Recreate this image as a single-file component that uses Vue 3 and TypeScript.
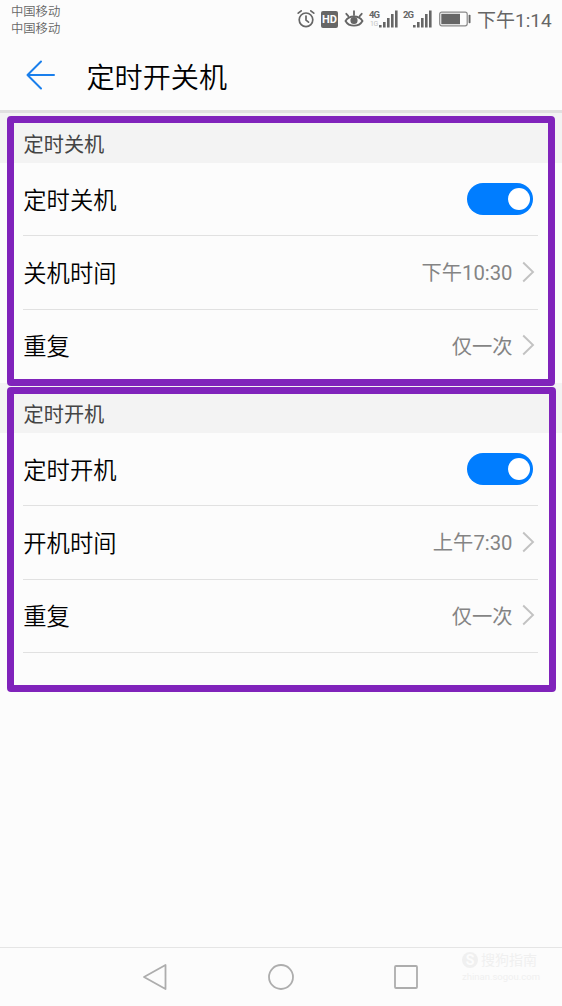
<script setup lang="ts">
interface Row {
  label: string
  value?: string
}

interface Section {
  id: string
  title: string
  rows: Row[]
}

const carriers: string[] = ['中国移动', '中国移动']

const sections: Section[] = [
  {
    id: 'off',
    title: '定时关机',
    rows: [
      { label: '定时关机' },
      { label: '关机时间', value: '下午10:30' },
      { label: '重复', value: '仅一次' },
    ],
  },
  {
    id: 'on',
    title: '定时开机',
    rows: [
      { label: '定时开机' },
      { label: '开机时间', value: '上午7:30' },
      { label: '重复', value: '仅一次' },
    ],
  },
]
</script>

<template>
  <div class="screen">
    <div class="status">
      <div class="carriers">
        <span v-for="(c, i) in carriers" :key="i">{{ c }}</span>
      </div>
      <div class="indicators">
        <svg class="alarm" width="18" height="20" viewBox="0 0 18 20" fill="none" stroke="#666" stroke-width="1.7" stroke-linecap="round">
          <circle cx="9" cy="10.8" r="6.8" />
          <path d="M9 7v4.2l2.5 2M1.2 4.2 4.2 1.8M16.8 4.2l-3-2.4" />
        </svg>
        <span class="hd">HD</span>
        <svg class="eye" width="20" height="20" viewBox="0 0 20 20" fill="none" stroke="#666" stroke-width="1.8" stroke-linecap="round">
          <path d="M1.500 12C5 6 15 6 18.500 12C15 18.300 5 18.300 1.500 12Z" />
          <path d="M10 6V2.200M4.300 7.200 2.300 4.800M15.700 7.200l2-2.400" />
          <circle cx="10" cy="11.500" r="2.700" fill="#666" />
        </svg>
        <div class="network">
          <span class="net"><b>4G</b><small>1G</small></span>
          <svg width="19" height="18" viewBox="0 0 19 18" fill="#666">
            <path d="M0 15h2.600v2.500H0zM4 12h2.600v5.500H4zM8 8h2.600v9.500H8zM12 4h2.600v13.500H12zM16 0.500h2.600v17H16z" />
          </svg>
        </div>
        <div class="network">
          <span class="net"><b>2G</b></span>
          <svg width="19" height="18" viewBox="0 0 19 18" fill="#666">
            <path d="M0 15h2.600v2.500H0zM4 12h2.600v5.500H4zM8 8h2.600v9.500H8zM12 4h2.600v13.500H12zM16 0.500h2.600v17H16z" />
          </svg>
        </div>
        <svg class="battery" width="32" height="16" viewBox="0 0 32 16">
          <rect x=".7" y="1.200" width="27.500" height="13.600" rx="2" fill="none" stroke="#888" stroke-width="1.200" />
          <rect x="2.300" y="2.800" width="18.700" height="10.400" fill="#666" />
          <rect x="29.600" y="3.800" width="1.900" height="8.400" rx=".8" fill="#666" />
        </svg>
        <span class="clock">下午1:14</span>
      </div>
    </div>

    <header class="header">
      <svg class="back" width="30" height="30" viewBox="0 0 30 30" fill="none" stroke="#1a7fec" stroke-width="2" stroke-linecap="round" stroke-linejoin="round">
        <path d="M15 1.500 1.500 15 15 28.500M1.500 15H28" />
      </svg>
      <h1>定时开关机</h1>
    </header>

    <section v-for="s in sections" :key="s.id" class="section" :class="s.id">
      <h2>{{ s.title }}</h2>
      <div v-for="row in s.rows" :key="row.label" class="row">
        <span class="label">{{ row.label }}</span>
        <template v-if="row.value">
          <span class="value">{{ row.value }}</span>
          <svg class="chevron" width="13" height="22" viewBox="0 0 13 22" fill="none" stroke="#c2c2c2" stroke-width="1.900">
            <path d="M1.200 1.500 11 11 1.200 20.500" />
          </svg>
        </template>
        <span v-else class="toggle"><i></i></span>
      </div>
      <div class="frame"></div>
    </section>

    <nav class="navbar">
      <svg width="26" height="28" viewBox="0 0 26 28"><path d="M23.500 2v24L2 14Z" /></svg>
      <svg width="28" height="28" viewBox="0 0 28 28"><circle cx="14" cy="14" r="12" /></svg>
      <svg width="26" height="26" viewBox="0 0 26 26"><rect x="2" y="2" width="22" height="22" rx="1" /></svg>
      <div class="watermark">
        <div class="brand"><span class="logo">S</span>搜狗指南</div>
        <div class="site">zhinan.sogou.com</div>
      </div>
    </nav>
  </div>
</template>

<style>
body {
  margin: 0;
}
</style>

<style scoped>
.screen {
  display: flex;
  flex-direction: column;
  width: 562px;
  height: 1006px;
  overflow: hidden;
  background: #fcfcfc;
  color: #000;
  font-family: Roboto, "Noto Sans CJK SC", sans-serif;
}
.status {
  display: flex;
  justify-content: space-between;
  height: 40px;
  color: #666;
}
.carriers {
  display: flex;
  flex-direction: column;
  padding: 4px 0 0 11px;
  font-size: 12.3px;
  font-weight: 350;
  line-height: 17px;
}
.indicators {
  display: flex;
  align-items: center;
  height: 38px;
  padding-right: 12px;
}
.hd {
  width: 17px;
  height: 17px;
  margin-left: 6px;
  border-radius: 2px;
  background: #666;
  color: #fcfcfc;
  font-size: 11px;
  font-weight: 700;
  line-height: 18px;
  text-align: center;
}
.eye {
  margin-left: 6px;
}
.network {
  display: flex;
  align-items: flex-end;
  height: 18px;
  margin-left: 5px;
}
.net {
  display: flex;
  flex-direction: column;
  width: 10px;
  height: 18px;
  font-size: 9.500px;
  line-height: 10px;
}
.net b {
  letter-spacing: -1px;
}
.net small {
  padding-left: 1px;
  color: #c4c4c4;
  font-size: 7px;
  line-height: 9px;
  letter-spacing: -0.5px;
}
.battery {
  margin-left: 7px;
}
.clock {
  width: 73px;
  margin-left: 6px;
  padding-top: 3px;
  font-size: 19px;
  line-height: 38px;
  white-space: nowrap;
}
.header {
  display: flex;
  align-items: center;
  height: 70px;
  border-bottom: 3px solid #e0e0e0;
}
.back {
  margin: 0 30.500px 0 26px;
}
h1 {
  margin: 8px 0 0;
  color: #000;
  font-size: 28.100px;
  font-weight: 350;
  line-height: 40px;
}
.section {
  position: relative;
  height: 270px;
}
h2 {
  box-sizing: border-box;
  height: 50px;
  margin: 0;
  padding: 13px 24px 0 23.500px;
  background: #f3f3f3;
  color: #444;
  font-size: 20.200px;
  font-weight: 400;
  line-height: 38px;
}
.row {
  box-sizing: border-box;
  display: flex;
  align-items: center;
  height: 73.300px;
  margin: 0 24px 0 23px;
  border-bottom: 1px solid #e1e1e1;
}
.off .row:nth-of-type(3) {
  border-color: transparent;
}
.label {
  flex: 1;
  padding: 3px 0 0 0.300px;
  font-size: 23.300px;
  font-weight: 350;
  line-height: 34px;
}
.value {
  padding-top: 2px;
  color: #848484;
  font-size: 20.300px;
  line-height: 34px;
}
.chevron {
  margin: 0 3px 1px 9.500px;
}
.toggle {
  box-sizing: border-box;
  display: flex;
  justify-content: flex-end;
  width: 66px;
  height: 32px;
  margin-right: 5px;
  padding: 5px 3px;
  border-radius: 16px;
  background: #007dff;
}
.toggle i {
  width: 22px;
  height: 22px;
  border-radius: 50%;
  background: #fff;
}
.frame {
  position: absolute;
  z-index: 1;
  box-sizing: border-box;
  top: 3px;
  left: 7px;
  width: 548px;
  height: 270px;
  border: 7px solid #8023bb;
  border-radius: 4px;
}
.on .frame {
  top: 4px;
  width: 549px;
  height: 305px;
}
.navbar {
  position: relative;
  box-sizing: border-box;
  display: flex;
  align-items: center;
  height: 59px;
  margin-top: auto;
  padding-left: 142px;
  border-top: 1px solid #e5e5e5;
}
.navbar svg {
  fill: none;
  stroke: #adadad;
  stroke-width: 1.800;
  stroke-linejoin: round;
}
.navbar svg + svg {
  margin-left: 98.500px;
}
.watermark {
  position: absolute;
  top: 2px;
  left: 462px;
  color: #f0f0f0;
}
.brand {
  display: flex;
  align-items: center;
  gap: 3px;
  font-size: 14px;
  line-height: 20px;
}
.logo {
  width: 16px;
  height: 16px;
  border-radius: 50%;
  background: #f0f0f0;
  color: #fcfcfc;
  font-weight: 700;
  line-height: 16px;
  text-align: center;
}
.site {
  font-size: 9.500px;
  line-height: 14px;
}
</style>
